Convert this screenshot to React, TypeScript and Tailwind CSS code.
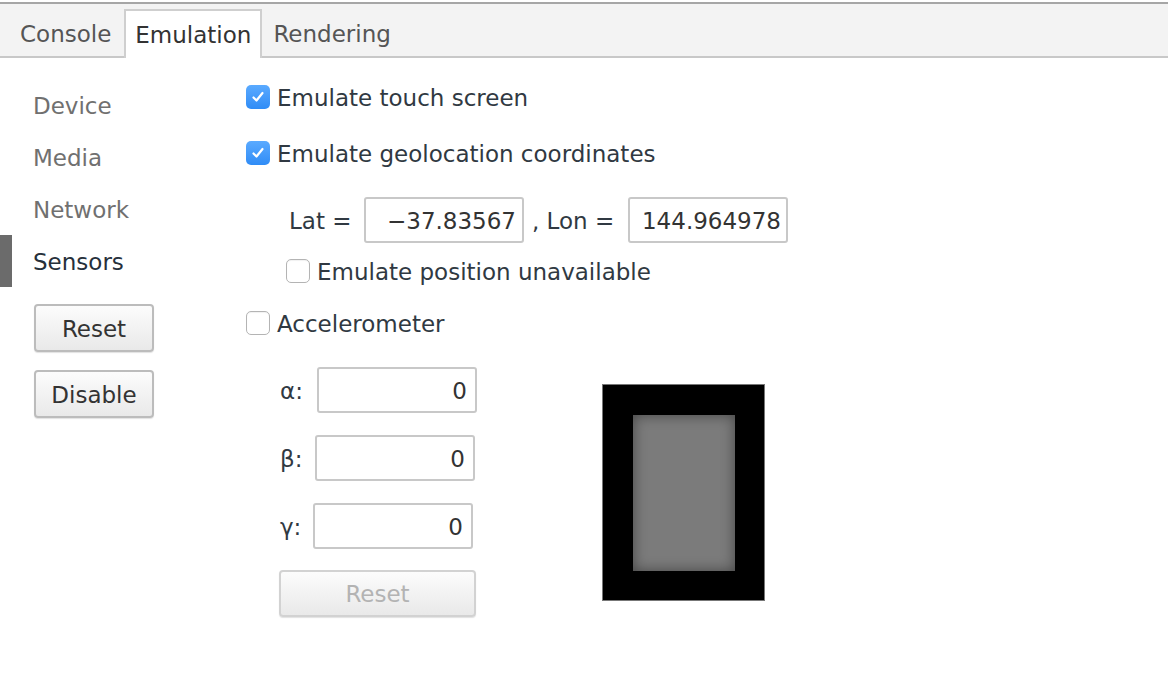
import React from "react";

const font = { fontFamily: '"DejaVu Sans", "Liberation Sans", sans-serif' };

const Check = ({ on }: { on: boolean }) =>
  on ? (
    <span className="flex h-[24px] w-[24px] shrink-0 items-center justify-center rounded-[5px] bg-gradient-to-b from-[#5aaaff] to-[#2f8cf6]">
      <svg width="16" height="16" viewBox="0 0 16 16" fill="none">
        <polyline points="3.5,8.5 6.5,11.5 12.5,4" stroke="white" strokeWidth="2.2" strokeLinecap="round" strokeLinejoin="round" />
      </svg>
    </span>
  ) : (
    <span className="h-[24px] w-[24px] shrink-0 rounded-[5px] border-[1.5px] border-[#b4b4b4] bg-white shadow-[inset_0_1px_1px_rgba(0,0,0,0.06)]" />
  );

const Button = ({ label, disabled, className }: { label: string; disabled?: boolean; className: string }) => (
  <button
    className={
      "flex items-center justify-center rounded-[4px] border-2 bg-gradient-to-b from-[#fcfcfc] to-[#e9e9e9] pt-[2px] shadow-[0_1px_1px_rgba(0,0,0,0.12)] " +
      (disabled ? "border-[#d2d2d2] text-[#b3b3b3] " : "border-[#bcbcbc] text-[#333] ") +
      className
    }
  >
    {label}
  </button>
);

const NumInput = ({ value, className }: { value: string; className: string }) => (
  <div
    className={
      "flex h-[46px] items-center rounded-[3px] border-2 border-[#c8c8c8] bg-white pt-[2px] text-[#333] " + className
    }
  >
    {value}
  </div>
);

export default function App() {
  const side = ["Device", "Media", "Network", "Sensors"];
  return (
    <div className="h-[690px] w-[1168px] bg-white text-[23px] text-[#303942]" style={font}>
      <div className="mt-[2px] flex h-[56px] items-end border-y-2 border-t-[#a6a6a6] border-b-[#c8c8c8] bg-[#f3f3f3] pl-[9px]">
        <div className="-mb-[2px] flex h-[49px] items-center pl-[11px] pr-[13px] pt-[2px] text-[#555]">Console</div>
        <div className="-mb-[2px] flex h-[49px] items-center border-x-2 border-t-2 border-[#cfcfcf] bg-white px-[9px] pt-[2px] text-[#333]">
          Emulation
        </div>
        <div className="-mb-[2px] flex h-[49px] items-center px-[11px] pt-[2px] text-[#555]">Rendering</div>
      </div>

      <div className="flex">
        <div className="w-[246px] shrink-0 pt-[21px]">
          {side.map((s) => (
            <div key={s} className="flex h-[52px] items-center">
              <div className={"h-full w-[12px] " + (s === "Sensors" ? "bg-[#6b6b6b]" : "")} />
              <span className={"ml-[21px] pt-[3px] " + (s === "Sensors" ? "text-[#26303b]" : "text-[#707070]")}>{s}</span>
            </div>
          ))}
          <Button label="Reset" className="ml-[34px] mt-[17px] h-[48px] w-[120px]" />
          <Button label="Disable" className="ml-[34px] mt-[18px] h-[48px] w-[120px]" />
        </div>

        <div className="flex flex-col pt-[11px]">
          <div className="flex h-[56px] items-center gap-[7px]">
            <Check on />
            <span className="pt-[2px]">Emulate touch screen</span>
          </div>
          <div className="flex h-[56px] items-center gap-[7px]">
            <Check on />
            <span className="pt-[2px]">Emulate geolocation coordinates</span>
          </div>
          <div className="mt-[16px] flex h-[46px] items-center pl-[43px]">
            <span className="w-[75px] pt-[2px]">Lat =</span>
            <NumInput value="−37.83567" className="w-[160px] justify-end pr-[6px]" />
            <span className="w-[104px] pl-[8px] pt-[2px]">, Lon =</span>
            <NumInput value="144.964978" className="w-[160px] justify-end pr-[5px]" />
          </div>
          <div className="flex h-[56px] items-center gap-[7px] pl-[40px]">
            <Check on={false} />
            <span className="pt-[2px]">Emulate position unavailable</span>
          </div>
          <div className="flex h-[48px] items-center gap-[7px]">
            <Check on={false} />
            <span className="pt-[2px]">Accelerometer</span>
          </div>

          <div className="mt-[20px] flex pl-[34px]">
            <div className="flex w-[197px] flex-col">
              <div className="flex h-[46px] items-center">
                <span className="w-[37px] pt-[2px]">α:</span>
                <NumInput value="0" className="w-[160px] justify-end pr-[8px]" />
              </div>
              <div className="mt-[22px] flex h-[46px] items-center">
                <span className="w-[35px] pt-[2px]">β:</span>
                <NumInput value="0" className="w-[160px] justify-end pr-[8px]" />
              </div>
              <div className="mt-[22px] flex h-[46px] items-center">
                <span className="w-[33px] pt-[2px]">γ:</span>
                <NumInput value="0" className="w-[160px] justify-end pr-[8px]" />
              </div>
              <Button label="Reset" disabled className="mt-[21px] h-[47px] w-[197px] -ml-px" />
            </div>
            <div className="ml-[125px] mt-[17px] flex h-[217px] w-[163px] items-center justify-center border border-[#777] bg-black">
              <div className="h-[156px] w-[102px] bg-[#7b7b7b] shadow-[inset_0_0_14px_rgba(0,0,0,0.45)]" />
            </div>
          </div>
        </div>
      </div>
    </div>
  );
}
